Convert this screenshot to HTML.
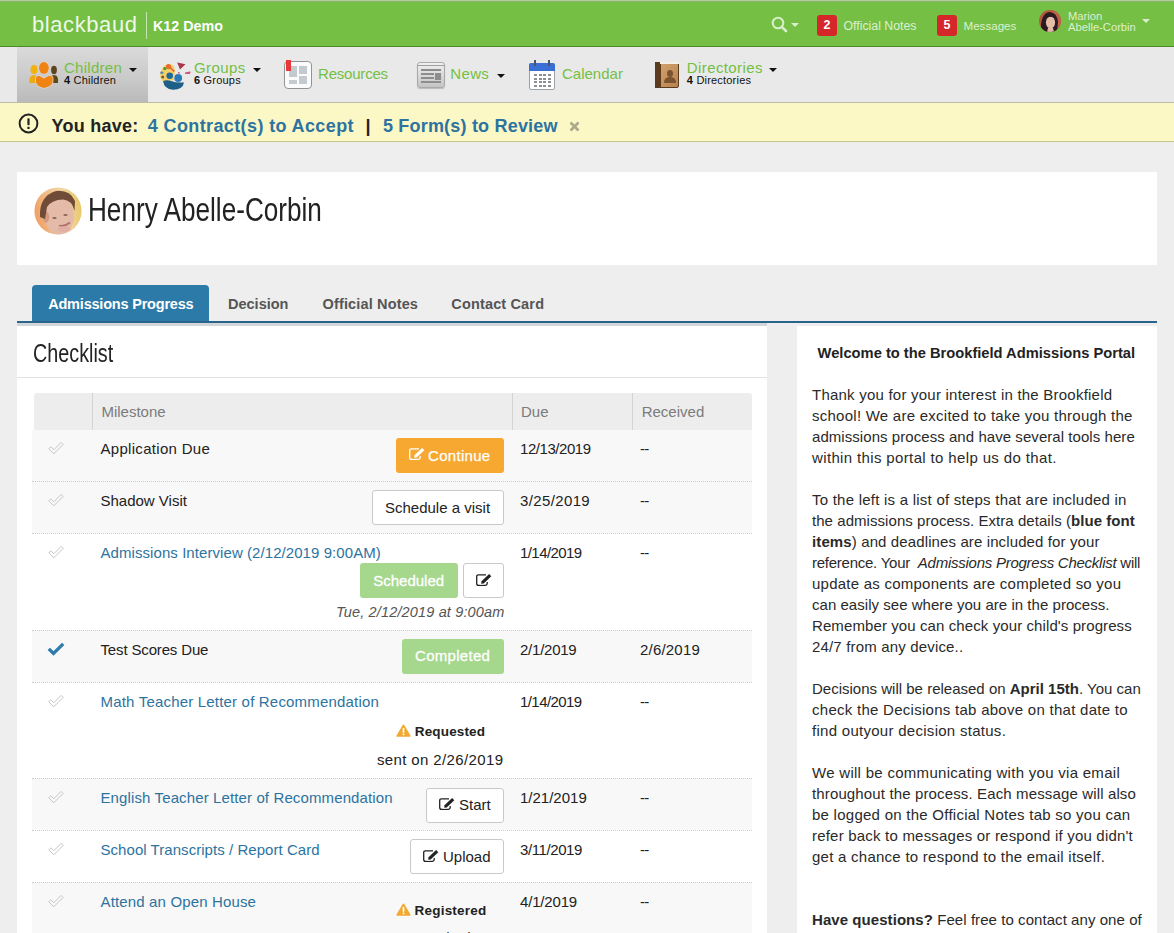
<!DOCTYPE html>
<html><head><meta charset="utf-8">
<style>
*{box-sizing:border-box;margin:0;padding:0}
html,body{width:1174px;height:933px;overflow:hidden;background:#eeeeee;font-family:"Liberation Sans",sans-serif;color:#222}
.a{position:absolute;white-space:nowrap}
.caret{position:absolute;width:0;height:0;border-left:4px solid transparent;border-right:4px solid transparent;border-top:4px solid #111}
.badge{position:absolute;width:20px;height:21px;background:#d5262a;border-radius:3px}
.blue{color:#2d73a0}
.gn{color:#74bf44}
.btn{position:absolute;border-radius:3px}
.bw{background:#fff;border:1px solid #c9c9c9}
.card{position:absolute;background:#fff}
</style></head><body>

<div class="a" style="left:0;top:0;width:1174px;height:47px;background:#74bf44"></div>
<div class="a" style="left:0;top:0;width:1174px;height:1px;background:#b0cc9a"></div><div class="a" style="left:0;top:1px;width:1174px;height:1px;background:#8ab56e"></div>
<div class="a" style="left:0;top:46px;width:1174px;height:1px;background:#4d8a2c"></div>
<div class="a " style="left:32px;top:13.68px;font-size:22px;line-height:22px;color:#eef8e8;letter-spacing:0.58px">blackbaud</div>

<div class="a" style="left:146px;top:12px;width:1px;height:27px;background:#c5e5b0"></div>
<div class="a " style="left:153px;top:18.90px;font-size:14.3px;line-height:14.3px;color:#fff;font-weight:bold">K12 Demo</div>

<svg class="a" style="left:771px;top:16px" width="18" height="18" viewBox="0 0 18 18"><circle cx="7" cy="7" r="5.3" fill="none" stroke="#d9eecb" stroke-width="2"/><line x1="10.8" y1="10.8" x2="15" y2="15" stroke="#d9eecb" stroke-width="2.6" stroke-linecap="round"/></svg>
<div class="caret" style="left:791px;top:23px;border-top-color:#d9eecb"></div>
<div class="badge" style="left:817px;top:15px"></div>
<div class="a " style="left:823.5px;top:19.42px;font-size:12.5px;line-height:12.5px;color:#fff;font-weight:bold">2</div>

<div class="a " style="left:843.5px;top:19.59px;font-size:12.3px;line-height:12.3px;color:#ddf0d0">Official Notes</div>

<div class="badge" style="left:937px;top:15px"></div>
<div class="a " style="left:943.5px;top:19.42px;font-size:12.5px;line-height:12.5px;color:#fff;font-weight:bold">5</div>

<div class="a " style="left:963.5px;top:20.18px;font-size:11.6px;line-height:11.6px;color:#ddf0d0">Messages</div>

<svg class="a" style="left:1039px;top:10px" width="22" height="22" viewBox="0 0 22 22"><defs><clipPath id="mc"><circle cx="11" cy="11" r="11"/></clipPath></defs>
<g clip-path="url(#mc)"><rect width="22" height="22" fill="#b35a3e"/><rect x="15" y="0" width="7" height="22" fill="#c0604a"/>
<path d="M2 22 Q1 4 10 2 Q18 2 19 12 L18 22Z" fill="#2b1a1f"/>
<ellipse cx="11.5" cy="12.5" rx="4.6" ry="6" fill="#e6bda8"/>
<path d="M7 9 Q10 5 16 8 L16 6 Q11 2 6 7Z" fill="#2b1a1f"/>
<path d="M9 18 L14 18 L15 22 L8 22Z" fill="#e0b8a0"/>
</g></svg>
<div class="a " style="left:1068px;top:11.02px;font-size:11.2px;line-height:11.2px;color:#ddf0d0">Marion</div>

<div class="a " style="left:1068px;top:22.22px;font-size:11.2px;line-height:11.2px;color:#ddf0d0">Abelle-Corbin</div>

<div class="caret" style="left:1142px;top:19px;border-top-color:#d9eecb"></div>
<div class="a" style="left:0;top:47px;width:1174px;height:55px;background:#e9e9e9"></div>
<div class="a" style="left:17px;top:47px;width:131px;height:55px;background:linear-gradient(#dadada,#c9c9c9 60%,#bababa)"></div>
<svg class="a" style="left:24px;top:56px" width="40" height="36" viewBox="0 0 40 36">
<ellipse cx="10" cy="13.5" rx="3.5" ry="4.6" fill="#f1b20f"/><path d="M5.4 27 Q5 20 8.5 19.3 L12 19.3 L12 27Z" fill="#eeaa12"/>
<ellipse cx="30" cy="14" rx="2.9" ry="4.2" fill="#5e4320"/><path d="M27.8 19.3 L31.5 19.3 Q34.5 20 34 27 L28 27Z" fill="#5a4a1c"/>
<ellipse cx="19.9" cy="12" rx="4.9" ry="6.1" fill="#f08412" stroke="#dcd6d0" stroke-width="1.6" paint-order="stroke"/>
<path d="M12 21.5 Q12.5 19.7 15 19.7 L19.9 22.5 L25 19.7 Q28.5 19.7 28.6 22 L28.6 26 Q28 30.5 20 32 Q12.3 30.5 12 26Z" fill="#f08412" stroke="#dcd6d0" stroke-width="1.6" paint-order="stroke"/>
</svg>
<div class="a " style="left:64px;top:60.00px;font-size:15px;line-height:15px;color:#74bf44;letter-spacing:0.28px">Children</div>

<div class="a " style="left:64px;top:74.89px;font-size:11px;line-height:11px;color:#111;letter-spacing:0.2px"><b>4</b> Children</div>

<div class="caret" style="left:129px;top:68px"></div>
<svg class="a" style="left:155px;top:58px" width="40" height="36" viewBox="0 0 40 36">
<path d="M5 19 Q5 8 14 6 Q19 6 20 12 L19 22 L8 24Z" fill="#f5cf6a"/>
<circle cx="13.5" cy="8.6" r="2.6" fill="#ee6a2a"/><circle cx="9.8" cy="10.6" r="1.7" fill="#46a02a"/>
<ellipse cx="6.8" cy="14.7" rx="1.7" ry="1.3" fill="#5a8aa8"/><circle cx="7.7" cy="19.1" r="1.5" fill="#6a5a3a"/>
<line x1="15.4" y1="9.7" x2="19.3" y2="13.5" stroke="#d8553a" stroke-width="1.4"/>
<circle cx="14.7" cy="17.8" r="3.3" fill="#1f6a94"/><circle cx="23.2" cy="20" r="3.9" fill="#2a7ab8"/>
<path d="M8.1 23 Q12 21.5 16 23 Q21 25 29 24.5 Q28 31.5 18 31.7 Q9 31 8.1 23Z" fill="#1d5f86"/>
<path d="M22.2 4.6 L30.5 6.2 L25 11.6Z" fill="#a8354a"/><path d="M30.1 15.2 L35.1 13.9 L34.5 15.6Z" fill="#d04a70" stroke="#d04a70" stroke-width="1"/>
<line x1="23.9" y1="13.9" x2="23.9" y2="15.6" stroke="#c24a5a" stroke-width="1.4"/>
</svg>
<div class="a " style="left:194px;top:60.00px;font-size:15px;line-height:15px;color:#74bf44;letter-spacing:0.4px">Groups</div>

<div class="a " style="left:194px;top:74.89px;font-size:11px;line-height:11px;color:#111;letter-spacing:0.2px"><b>6</b> Groups</div>

<div class="caret" style="left:253px;top:68px"></div>
<div class="a" style="left:284px;top:61px;width:28px;height:28px;border:1.6px solid #939393;border-radius:4px;background:#fbfbfb">
<div class="a" style="left:4px;top:4px;width:8px;height:11px;background:#c3cbd0"></div>
<div class="a" style="left:14px;top:4px;width:8px;height:8px;background:#c3cbd0"></div>
<div class="a" style="left:4px;top:18px;width:8px;height:4px;background:#c3cbd0"></div>
<div class="a" style="left:14px;top:14px;width:8px;height:8px;background:#c3cbd0"></div>
<div class="a" style="left:1px;top:-2px;width:5px;height:11px;background:#e8383a"></div>
</div>
<div class="a " style="left:318px;top:66.30px;font-size:15px;line-height:15px;color:#74bf44;letter-spacing:-0.2px">Resources</div>

<div class="a" style="left:417px;top:62px;width:28px;height:26px;border-radius:3px;background:linear-gradient(#f0f0f0,#c4c4c4);border:1px solid #a9a9a9;box-shadow:0 1px 1px rgba(0,0,0,.2)">
<div class="a" style="left:-1px;top:2px;width:28px;height:1px;background:#a0a0a0"></div>
<div class="a" style="left:3px;top:6px;width:20px;height:2px;background:#8d8d8d"></div>
<div class="a" style="left:3px;top:10px;width:13px;height:2px;background:#8d8d8d"></div>
<div class="a" style="left:17px;top:10px;width:6px;height:7px;background:#8d8d8d"></div>
<div class="a" style="left:3px;top:14px;width:13px;height:2px;background:#8d8d8d"></div>
<div class="a" style="left:3px;top:18px;width:20px;height:2px;background:#8d8d8d"></div>
</div>
<div class="a " style="left:450.3px;top:66.30px;font-size:15px;line-height:15px;color:#74bf44;letter-spacing:0.35px">News</div>

<div class="caret" style="left:497px;top:74px"></div>
<div class="a" style="left:529px;top:63px;width:26px;height:27px;border-radius:2px;background:#fff;border:1px solid #9aa2a8">
<div class="a" style="left:-1px;top:-1px;width:26px;height:8px;background:#3a70d6;border-radius:2px 2px 0 0"></div>
<div class="a" style="left:4px;top:10px;width:17px;height:13px;background:repeating-linear-gradient(90deg,#8a9096 0 3px,transparent 3px 4.6px);-webkit-mask:repeating-linear-gradient(#000 0 2px,transparent 2px 3.7px)"></div>
</div>
<div class="a" style="left:534px;top:60px;width:2px;height:6px;background:#4b5560"></div>
<div class="a" style="left:548px;top:60px;width:2px;height:6px;background:#4b5560"></div>
<div class="a " style="left:562px;top:66.30px;font-size:15px;line-height:15px;color:#74bf44">Calendar</div>

<div class="a" style="left:655px;top:62px;width:24px;height:26px;background:linear-gradient(135deg,#d6a571,#b98350);border-radius:2px;border:1px solid #5b3b1e">
<div class="a" style="left:-1px;top:-1px;width:6px;height:26px;background:#5b3b1e"></div>
<div class="a" style="left:4px;top:-1px;width:19px;height:2px;background:#f4f0ea"></div>
<div class="a" style="left:11px;top:7px;width:6px;height:7px;border-radius:50%;background:#7a5430"></div>
<div class="a" style="left:8px;top:14px;width:12px;height:6px;border-radius:6px 6px 1px 1px;background:#7a5430"></div>
</div>
<div class="a " style="left:686.8px;top:60.00px;font-size:15px;line-height:15px;color:#74bf44;letter-spacing:0.4px">Directories</div>

<div class="a " style="left:686.8px;top:74.89px;font-size:11px;line-height:11px;color:#111;letter-spacing:0.2px"><b>4</b> Directories</div>

<div class="caret" style="left:769px;top:68px"></div>
<div class="a" style="left:0;top:102px;width:1174px;height:40px;background:#fbf8c5;border-bottom:1px solid #c9c48e;border-top:1px solid #bdbba6"></div>
<svg class="a" style="left:18px;top:113px" width="21" height="21" viewBox="0 0 21 21"><circle cx="10.5" cy="10.5" r="8.9" fill="none" stroke="#222" stroke-width="2"/><rect x="9.4" y="5.2" width="2.2" height="7" rx="0.8" fill="#222"/><rect x="9.4" y="13.8" width="2.2" height="2.2" fill="#222"/></svg>
<div class="a " style="left:51.5px;top:117.36px;font-size:18px;line-height:18px;font-weight:bold;color:#222;letter-spacing:0.25px">You have:</div>

<div class="a blue" style="left:147.8px;top:117.36px;font-size:18px;line-height:18px;font-weight:bold;letter-spacing:0.38px">4 Contract(s) to Accept</div>

<div class="a " style="left:365.5px;top:117.36px;font-size:18px;line-height:18px;font-weight:bold;color:#222">|</div>

<div class="a blue" style="left:382.9px;top:117.36px;font-size:18px;line-height:18px;font-weight:bold;letter-spacing:0.2px">5 Form(s) to Review</div>

<svg class="a" style="left:569px;top:121px" width="11" height="11" viewBox="0 0 11 11"><path d="M1.5 1.5 L9.5 9.5 M9.5 1.5 L1.5 9.5" stroke="#aaa98c" stroke-width="2.6"/></svg>
<div class="card" style="left:17px;top:172px;width:1140px;height:93px"></div>
<svg class="a" style="left:34px;top:187px" width="48" height="48" viewBox="0 0 48 48"><defs><clipPath id="hc"><circle cx="24" cy="24" r="23.6"/></clipPath>
<linearGradient id="hbg" x1="0" x2="1" y1="0.2" y2="0"><stop offset="0" stop-color="#f0a46a"/><stop offset="0.55" stop-color="#f2d6a6"/><stop offset="1" stop-color="#e6c458"/></linearGradient>
<filter id="hb" x="-10%" y="-10%" width="120%" height="120%"><feGaussianBlur stdDeviation="0.7"/></filter></defs>
<g clip-path="url(#hc)"><rect width="48" height="48" fill="url(#hbg)"/>
<g filter="url(#hb)">
<ellipse cx="25.5" cy="29" rx="14.5" ry="19" fill="#e3bba8"/>
<ellipse cx="12" cy="30" rx="3.2" ry="5.5" fill="#d49a80"/>
<path d="M6 30 Q5 9 22 4 Q36 2.5 41 14 L40.5 24 Q38 13 29 12.5 Q18 12.5 13 20 L11 32Z" fill="#6f4b37"/>
<ellipse cx="20.5" cy="31" rx="2.2" ry="1.1" fill="#8c6457"/><ellipse cx="31.5" cy="28" rx="2.2" ry="1.1" fill="#8c6457"/>
<path d="M25 38.5 Q30.5 40 36 35.5" stroke="#b0706a" stroke-width="1.8" fill="none"/>
<ellipse cx="30" cy="42" rx="7" ry="3" fill="#e0a8a0" opacity="0.6"/>
</g></g></svg>
<div class="a" style="left:88.2px;top:221px;height:0"><div style="position:absolute;left:0;bottom:0;transform:scaleX(0.792);transform-origin:0 100%;font-size:33px;line-height:33px;color:#222;white-space:nowrap;margin-bottom:-5.25px">Henry Abelle-Corbin</div></div>
<div class="a" style="left:32px;top:285px;width:177px;height:37px;background:#2b7aa8;border-radius:4px 4px 0 0"></div>
<div class="a " style="left:48.2px;top:297.23px;font-size:14.5px;line-height:14.5px;color:#fff;font-weight:bold;letter-spacing:-0.2px">Admissions Progress</div>

<div class="a " style="left:228px;top:297.23px;font-size:14.5px;line-height:14.5px;color:#555;font-weight:bold">Decision</div>

<div class="a " style="left:322.5px;top:297.23px;font-size:14.5px;line-height:14.5px;color:#555;font-weight:bold;letter-spacing:0.15px">Official Notes</div>

<div class="a " style="left:451.3px;top:297.23px;font-size:14.5px;line-height:14.5px;color:#555;font-weight:bold;letter-spacing:0.15px">Contact Card</div>

<div class="a" style="left:17px;top:320.5px;width:1140px;height:2.5px;background:#28648c"></div>
<div class="card" style="left:17px;top:323px;width:750px;height:610px;border-top:3px solid #d2d6d9"></div>
<div class="a" style="left:32.6px;top:362px;height:0"><div style="position:absolute;left:0;bottom:0;transform:scaleX(0.76);transform-origin:0 100%;font-size:26px;line-height:26px;color:#222;white-space:nowrap;margin-bottom:-4.1px">Checklist</div></div>
<div class="a" style="left:17px;top:377px;width:750px;height:1px;background:#e3e3e3"></div>
<div class="a" style="left:34px;top:393px;width:718px;height:37px;background:#ededed;border-radius:3px 3px 0 0"></div>
<div class="a" style="left:92px;top:393px;width:1px;height:37px;background:#d3d3d3"></div>
<div class="a" style="left:512px;top:393px;width:1px;height:37px;background:#d3d3d3"></div>
<div class="a" style="left:632px;top:393px;width:1px;height:37px;background:#d3d3d3"></div>
<div class="a " style="left:101.4px;top:404.30px;font-size:15px;line-height:15px;color:#7b7b7b">Milestone</div>

<div class="a " style="left:521px;top:404.30px;font-size:15px;line-height:15px;color:#7b7b7b">Due</div>

<div class="a " style="left:641.7px;top:404.30px;font-size:15px;line-height:15px;color:#7b7b7b">Received</div>

<div class="a" style="left:32px;top:430px;width:720px;height:103px;background:#f8f8f8"></div>
<div class="a" style="left:32px;top:630px;width:720px;height:52px;background:#f8f8f8"></div>
<div class="a" style="left:32px;top:778px;width:720px;height:52px;background:#f8f8f8"></div>
<div class="a" style="left:32px;top:882px;width:720px;height:60px;background:#f8f8f8"></div>
<div class="a" style="left:32px;top:481px;width:720px;height:1px;border-top:1px dotted #cdcdcd"></div>
<div class="a" style="left:32px;top:533px;width:720px;height:1px;border-top:1px dotted #cdcdcd"></div>
<div class="a" style="left:32px;top:630px;width:720px;height:1px;border-top:1px dotted #cdcdcd"></div>
<div class="a" style="left:32px;top:682px;width:720px;height:1px;border-top:1px dotted #cdcdcd"></div>
<div class="a" style="left:32px;top:778px;width:720px;height:1px;border-top:1px dotted #cdcdcd"></div>
<div class="a" style="left:32px;top:830px;width:720px;height:1px;border-top:1px dotted #cdcdcd"></div>
<div class="a" style="left:32px;top:882px;width:720px;height:1px;border-top:1px dotted #cdcdcd"></div>
<svg class="a" style="left:47px;top:441px" width="18" height="14" viewBox="0 0 18 14"><path d="M1.8 7.8 L3.8 5.8 L6.8 8.8 L14.2 1.4 L16.2 3.4 L6.8 12.8Z" fill="none" stroke="#c6c6c6" stroke-width="1"/></svg>
<div class="a " style="left:100.5px;top:441.30px;font-size:15px;line-height:15px;letter-spacing:0.3px">Application Due</div>

<div class="a " style="left:520px;top:441.30px;font-size:15px;line-height:15px;letter-spacing:-0.44px">12/13/2019</div>

<div class="a " style="left:640px;top:441.30px;font-size:15px;line-height:15px;letter-spacing:-0.7px">--</div>

<div class="btn" style="left:396px;top:438px;width:108px;height:35px;background:#f6a831"></div>
<svg style="position:absolute;left:409px;top:447px" width="16" height="14" viewBox="0 0 16 14"><path d="M11.2 9 V10.6 Q11.2 12.4 9.4 12.4 H2.4 Q0.7 12.4 0.7 10.6 V3.6 Q0.7 1.8 2.4 1.8 H10" fill="none" stroke="#fff" stroke-width="1.3"/><path d="M5.2 10.7 L5.5 8.15 L13.1 0.95 L15.3 3.25 L7.7 10.45Z" fill="#fff" stroke="#f6a831" stroke-width="1.8" paint-order="stroke"/></svg>
<div class="a " style="left:428px;top:448.00px;font-size:15px;line-height:15px;color:#fff;-webkit-text-stroke:0.25px #fff;letter-spacing:0.3px">Continue</div>

<svg class="a" style="left:47px;top:493px" width="18" height="14" viewBox="0 0 18 14"><path d="M1.8 7.8 L3.8 5.8 L6.8 8.8 L14.2 1.4 L16.2 3.4 L6.8 12.8Z" fill="none" stroke="#c6c6c6" stroke-width="1"/></svg>
<div class="a " style="left:100.5px;top:493.30px;font-size:15px;line-height:15px;">Shadow Visit</div>

<div class="a " style="left:520px;top:493.30px;font-size:15px;line-height:15px;letter-spacing:0.37px">3/25/2019</div>

<div class="a " style="left:640px;top:493.30px;font-size:15px;line-height:15px;letter-spacing:-0.7px">--</div>

<div class="btn bw" style="left:371.6px;top:490.4px;width:132.2px;height:35px"></div><div class="a " style="left:385px;top:500.20px;font-size:15px;line-height:15px;">Schedule a visit</div>

<svg class="a" style="left:47px;top:545px" width="18" height="14" viewBox="0 0 18 14"><path d="M1.8 7.8 L3.8 5.8 L6.8 8.8 L14.2 1.4 L16.2 3.4 L6.8 12.8Z" fill="none" stroke="#c6c6c6" stroke-width="1"/></svg>
<div class="a blue" style="left:100.5px;top:545.30px;font-size:15px;line-height:15px;letter-spacing:0.07px">Admissions Interview (2/12/2019 9:00AM)</div>

<div class="a " style="left:520px;top:545.30px;font-size:15px;line-height:15px;letter-spacing:-0.57px">1/14/2019</div>

<div class="a " style="left:640px;top:545.30px;font-size:15px;line-height:15px;letter-spacing:-0.7px">--</div>

<div class="btn" style="left:360px;top:563px;width:98px;height:35px;background:#a5d78d"></div>
<div class="a " style="left:373.2px;top:573.00px;font-size:15px;line-height:15px;color:#fff;-webkit-text-stroke:0.3px #fff">Scheduled</div>

<div class="btn bw" style="left:463px;top:563px;width:41px;height:35px"></div><svg style="position:absolute;left:475.5px;top:572.5px" width="16" height="14" viewBox="0 0 16 14"><path d="M11.2 9 V10.6 Q11.2 12.4 9.4 12.4 H2.4 Q0.7 12.4 0.7 10.6 V3.6 Q0.7 1.8 2.4 1.8 H10" fill="none" stroke="#222" stroke-width="1.3"/><path d="M5.2 10.7 L5.5 8.15 L13.1 0.95 L15.3 3.25 L7.7 10.45Z" fill="#222" stroke="#fff" stroke-width="1.8" paint-order="stroke"/></svg>
<div class="a " style="right:669.5px;top:605.33px;font-size:14.5px;line-height:14.5px;font-style:italic;color:#555;letter-spacing:0.15px">Tue, 2/12/2019 at 9:00am</div>

<svg class="a" style="left:47px;top:642px" width="18" height="14" viewBox="0 0 18 14"><path d="M1.8 6.8 L6.5 11.5 L16.2 1.8" fill="none" stroke="#2e7cab" stroke-width="3.3"/></svg>
<div class="a " style="left:100.5px;top:642.30px;font-size:15px;line-height:15px;letter-spacing:-0.15px">Test Scores Due</div>

<div class="a " style="left:520px;top:642.30px;font-size:15px;line-height:15px;letter-spacing:-0.24px">2/1/2019</div>

<div class="a " style="left:640px;top:642.30px;font-size:15px;line-height:15px;letter-spacing:0.2px">2/6/2019</div>

<div class="btn" style="left:402px;top:639px;width:102px;height:35px;background:#a5d78d"></div>
<div class="a " style="left:415px;top:648.00px;font-size:15px;line-height:15px;color:#fff;-webkit-text-stroke:0.3px #fff;letter-spacing:0.3px">Completed</div>

<svg class="a" style="left:47px;top:694px" width="18" height="14" viewBox="0 0 18 14"><path d="M1.8 7.8 L3.8 5.8 L6.8 8.8 L14.2 1.4 L16.2 3.4 L6.8 12.8Z" fill="none" stroke="#c6c6c6" stroke-width="1"/></svg>
<div class="a blue" style="left:100.5px;top:694.30px;font-size:15px;line-height:15px;letter-spacing:0.19px">Math Teacher Letter of Recommendation</div>

<div class="a " style="left:520px;top:694.30px;font-size:15px;line-height:15px;letter-spacing:-0.57px">1/14/2019</div>

<div class="a " style="left:640px;top:694.30px;font-size:15px;line-height:15px;letter-spacing:-0.7px">--</div>

<svg class="a" style="left:396px;top:724px" width="15" height="13" viewBox="0 0 15 13"><path d="M7.5 0.6 Q8 0.6 8.3 1.1 L14.6 11.8 Q14.8 12.6 14 12.7 H1 Q0.2 12.6 0.4 11.8 L6.7 1.1 Q7 0.6 7.5 0.6Z" fill="#f2a934"/><rect x="6.7" y="4" width="1.6" height="4.8" fill="#fff"/><rect x="6.7" y="9.6" width="1.6" height="1.6" fill="#fff"/></svg>
<div class="a " style="left:414.8px;top:724.57px;font-size:13.5px;line-height:13.5px;font-weight:bold;color:#222;letter-spacing:0.15px">Requested</div>

<div class="a " style="right:670.5px;top:751.80px;font-size:15px;line-height:15px;color:#222;letter-spacing:0.38px">sent on 2/26/2019</div>

<svg class="a" style="left:47px;top:790px" width="18" height="14" viewBox="0 0 18 14"><path d="M1.8 7.8 L3.8 5.8 L6.8 8.8 L14.2 1.4 L16.2 3.4 L6.8 12.8Z" fill="none" stroke="#c6c6c6" stroke-width="1"/></svg>
<div class="a blue" style="left:100.5px;top:790.30px;font-size:15px;line-height:15px;letter-spacing:0.12px">English Teacher Letter of Recommendation</div>

<div class="a " style="left:520px;top:790.30px;font-size:15px;line-height:15px;">1/21/2019</div>

<div class="a " style="left:640px;top:790.30px;font-size:15px;line-height:15px;letter-spacing:-0.7px">--</div>

<div class="btn bw" style="left:426.2px;top:787.5px;width:77.6px;height:35px"></div><svg style="position:absolute;left:439px;top:797px" width="16" height="14" viewBox="0 0 16 14"><path d="M11.2 9 V10.6 Q11.2 12.4 9.4 12.4 H2.4 Q0.7 12.4 0.7 10.6 V3.6 Q0.7 1.8 2.4 1.8 H10" fill="none" stroke="#222" stroke-width="1.3"/><path d="M5.2 10.7 L5.5 8.15 L13.1 0.95 L15.3 3.25 L7.7 10.45Z" fill="#222" stroke="#fff" stroke-width="1.8" paint-order="stroke"/></svg><div class="a " style="left:459px;top:796.80px;font-size:15px;line-height:15px;">Start</div>

<svg class="a" style="left:47px;top:842px" width="18" height="14" viewBox="0 0 18 14"><path d="M1.8 7.8 L3.8 5.8 L6.8 8.8 L14.2 1.4 L16.2 3.4 L6.8 12.8Z" fill="none" stroke="#c6c6c6" stroke-width="1"/></svg>
<div class="a blue" style="left:100.5px;top:842.30px;font-size:15px;line-height:15px;letter-spacing:0.05px">School Transcripts / Report Card</div>

<div class="a " style="left:520px;top:842.30px;font-size:15px;line-height:15px;letter-spacing:-0.41px">3/11/2019</div>

<div class="a " style="left:640px;top:842.30px;font-size:15px;line-height:15px;letter-spacing:-0.7px">--</div>

<div class="btn bw" style="left:410px;top:839.3px;width:93.8px;height:35px"></div><svg style="position:absolute;left:423px;top:849px" width="16" height="14" viewBox="0 0 16 14"><path d="M11.2 9 V10.6 Q11.2 12.4 9.4 12.4 H2.4 Q0.7 12.4 0.7 10.6 V3.6 Q0.7 1.8 2.4 1.8 H10" fill="none" stroke="#222" stroke-width="1.3"/><path d="M5.2 10.7 L5.5 8.15 L13.1 0.95 L15.3 3.25 L7.7 10.45Z" fill="#222" stroke="#fff" stroke-width="1.8" paint-order="stroke"/></svg><div class="a " style="left:443px;top:848.80px;font-size:15px;line-height:15px;">Upload</div>

<svg class="a" style="left:47px;top:894px" width="18" height="14" viewBox="0 0 18 14"><path d="M1.8 7.8 L3.8 5.8 L6.8 8.8 L14.2 1.4 L16.2 3.4 L6.8 12.8Z" fill="none" stroke="#c6c6c6" stroke-width="1"/></svg>
<div class="a blue" style="left:100.5px;top:894.30px;font-size:15px;line-height:15px;letter-spacing:0.15px">Attend an Open House</div>

<div class="a " style="left:520px;top:894.30px;font-size:15px;line-height:15px;letter-spacing:-0.17px">4/1/2019</div>

<div class="a " style="left:640px;top:894.30px;font-size:15px;line-height:15px;letter-spacing:-0.7px">--</div>

<svg class="a" style="left:396px;top:903px" width="15" height="13" viewBox="0 0 15 13"><path d="M7.5 0.6 Q8 0.6 8.3 1.1 L14.6 11.8 Q14.8 12.6 14 12.7 H1 Q0.2 12.6 0.4 11.8 L6.7 1.1 Q7 0.6 7.5 0.6Z" fill="#f2a934"/><rect x="6.7" y="4" width="1.6" height="4.8" fill="#fff"/><rect x="6.7" y="9.6" width="1.6" height="1.6" fill="#fff"/></svg>
<div class="a " style="left:414.6px;top:903.57px;font-size:13.5px;line-height:13.5px;font-weight:bold;color:#222;letter-spacing:0.2px">Registered</div>

<div class="a " style="right:671px;top:930.30px;font-size:15px;line-height:15px;color:#222">sent on 2/26/2019</div>

<div class="card" style="left:797px;top:326px;width:360px;height:607px"></div>
<div class="a " style="left:817.6px;top:345.96px;font-size:14.7px;line-height:14.7px;font-weight:bold;color:#222">Welcome to the Brookfield Admissions Portal</div>

<div class="a " style="left:812px;top:386.80px;font-size:15px;line-height:15px;color:#2a2a2a;letter-spacing:0.225px">Thank you for your interest in the Brookfield</div>

<div class="a " style="left:812px;top:407.80px;font-size:15px;line-height:15px;color:#2a2a2a;letter-spacing:0.253px">school! We are excited to take you through the</div>

<div class="a " style="left:812px;top:428.80px;font-size:15px;line-height:15px;color:#2a2a2a;letter-spacing:0.057px">admissions process and have several tools here</div>

<div class="a " style="left:812px;top:449.80px;font-size:15px;line-height:15px;color:#2a2a2a;letter-spacing:0.361px">within this portal to help us do that.</div>

<div class="a " style="left:812px;top:491.80px;font-size:15px;line-height:15px;color:#2a2a2a;letter-spacing:0.236px">To the left is a list of steps that are included in</div>

<div class="a " style="left:812px;top:512.80px;font-size:15px;line-height:15px;color:#2a2a2a;letter-spacing:0.056px">the admissions process. Extra details (<b>blue font</b></div>

<div class="a " style="left:812px;top:533.80px;font-size:15px;line-height:15px;color:#2a2a2a;letter-spacing:0.117px"><b>items</b>) and deadlines are included for your</div>

<div class="a " style="left:812px;top:554.80px;font-size:15px;line-height:15px;color:#2a2a2a;letter-spacing:-0.251px">reference. Your &nbsp;<i>Admissions Progress Checklist</i> will</div>

<div class="a " style="left:812px;top:575.80px;font-size:15px;line-height:15px;color:#2a2a2a;letter-spacing:0.242px">update as components are completed so you</div>

<div class="a " style="left:812px;top:596.80px;font-size:15px;line-height:15px;color:#2a2a2a;letter-spacing:0.034px">can easily see where you are in the process.</div>

<div class="a " style="left:812px;top:617.80px;font-size:15px;line-height:15px;color:#2a2a2a;letter-spacing:0.098px">Remember you can check your child's progress</div>

<div class="a " style="left:812px;top:638.80px;font-size:15px;line-height:15px;color:#2a2a2a;letter-spacing:0.169px">24/7 from any device..</div>

<div class="a " style="left:812px;top:680.80px;font-size:15px;line-height:15px;color:#2a2a2a;letter-spacing:0.005px">Decisions will be released on <b>April 15th</b>. You can</div>

<div class="a " style="left:812px;top:701.80px;font-size:15px;line-height:15px;color:#2a2a2a;letter-spacing:0.273px">check the Decisions tab above on that date to</div>

<div class="a " style="left:812px;top:722.80px;font-size:15px;line-height:15px;color:#2a2a2a;letter-spacing:0.281px">find outyour decision status.</div>

<div class="a " style="left:812px;top:764.80px;font-size:15px;line-height:15px;color:#2a2a2a;letter-spacing:0.287px">We will be communicating with you via email</div>

<div class="a " style="left:812px;top:785.80px;font-size:15px;line-height:15px;color:#2a2a2a;letter-spacing:0.137px">throughout the process. Each message will also</div>

<div class="a " style="left:812px;top:806.80px;font-size:15px;line-height:15px;color:#2a2a2a;letter-spacing:0.257px">be logged on the Official Notes tab so you can</div>

<div class="a " style="left:812px;top:827.80px;font-size:15px;line-height:15px;color:#2a2a2a;letter-spacing:0.205px">refer back to messages or respond if you didn't</div>

<div class="a " style="left:812px;top:848.80px;font-size:15px;line-height:15px;color:#2a2a2a;letter-spacing:0.256px">get a chance to respond to the email itself.</div>

<div class="a " style="left:812px;top:911.80px;font-size:15px;line-height:15px;color:#2a2a2a;letter-spacing:0.063px"><b>Have questions?</b> Feel free to contact any one of</div>

</body></html>
